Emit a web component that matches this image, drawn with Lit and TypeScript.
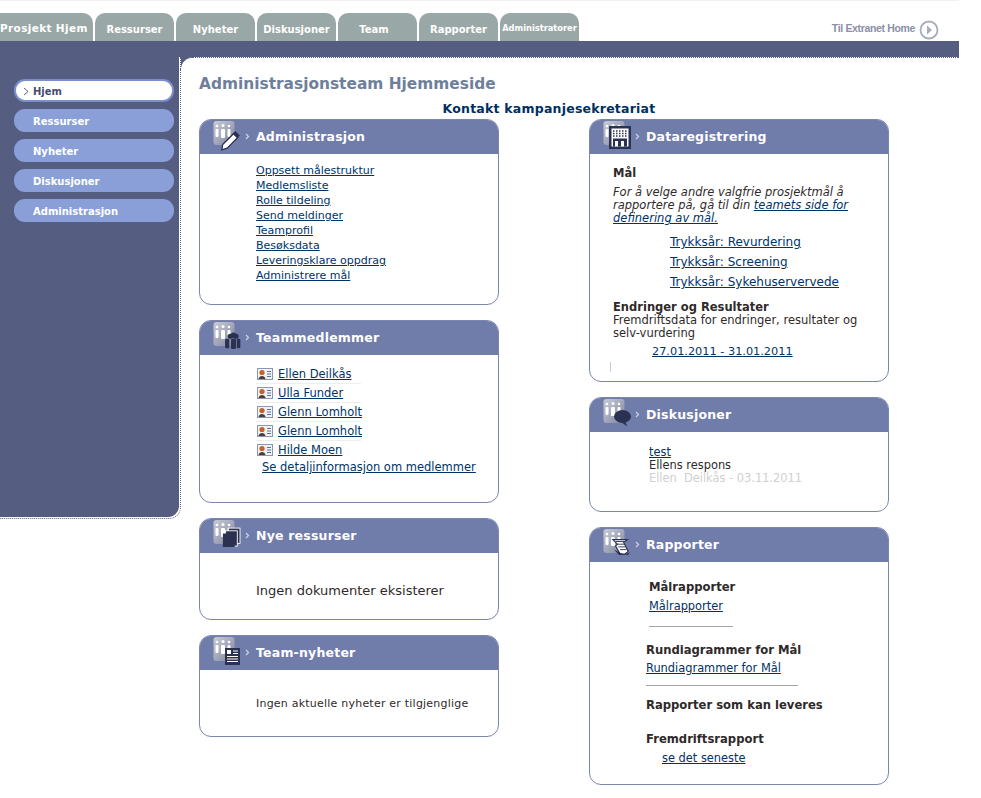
import { LitElement, html, css, svg } from "lit";
import { customElement } from "lit/decorators.js";

const overlays: Record<string, unknown> = {
  pen: svg`<g transform="translate(-1,3) scale(.9)"><path d="M13 25 L25 13 L30 17 L18 29 L12 31 Z" fill="#fff" stroke="#2b3150" stroke-width="1.4"/><path d="M24 13 L27 10 L32 15 L29 18 Z" fill="#2b3150"/></g>`,
  people: svg`<g transform="translate(2,3.5) scale(.85)"><circle cx="19" cy="15" r="3" fill="#2b3150"/><circle cx="23" cy="14" r="3.4" fill="#2b3150"/><circle cx="26" cy="15" r="3" fill="#2b3150"/><rect x="13" y="18" width="5" height="11" rx="1.5" fill="#2b3150"/><rect x="20" y="18" width="6" height="12" rx="1.5" fill="#2b3150"/><rect x="27" y="18" width="4" height="11" rx="1.5" fill="#2b3150"/></g>`,
  docs: svg`<g transform="translate(1,2) scale(.9)"><rect x="17" y="9" width="13" height="17" fill="#2b3150" stroke="#fff"/><rect x="14" y="12" width="13" height="17" fill="#2b3150" stroke="#fff"/><rect x="11" y="15" width="13" height="15" fill="#2b3150"/></g>`,
  news: svg`<g transform="translate(0,2)"><rect x="13" y="11" width="15" height="17" fill="#2b3150"/><rect x="15" y="13" width="4" height="4" fill="#fff"/><path d="M21 14H26M21 16.5H26M15 19.5H26M15 22H26M15 24.500H26" stroke="#fff" stroke-width="1"/></g>`,
  building: svg`<g transform="translate(1,3)"><rect x="6" y="4" width="22" height="23" fill="#2b3150"/><rect x="8.500" y="6.500" width="17" height="18" fill="#fff"/><path d="M10 9H24M10 11.500H24M10 14H24" stroke="#2b3150" stroke-width="1.300" stroke-dasharray="1.500 1.500"/><rect x="10" y="16.500" width="14" height="8" fill="#2b3150"/><rect x="12" y="19" width="3" height="5.500" fill="#fff"/><rect x="18" y="19" width="3" height="5.500" fill="#fff"/></g>`,
  speech: svg`<g transform="translate(-1.5,1.5)"><ellipse cx="22" cy="18" rx="8.500" ry="6.500" fill="#2b3150"/><path d="M24 22 L27 28 L21 24 Z" fill="#2b3150"/></g>`,
  scroll: svg`<g transform="translate(1,1) scale(.9)"><path d="M11 13 H27 L23 16 L28 26 L24 29 H19 L14 20 L16 18 Z" fill="#fff" stroke="#2b3150" stroke-width="1.300"/><path d="M14 15H24M16 18H24M17 21H25M19 24H26" stroke="#2b3150" stroke-width="1"/><path d="M12 24 L18 30 H28 L30 27 L24 30 Z" fill="#2b3150"/></g>`,
};

const cardIcon = (name: string) => html`<svg class="icon" width="34" height="32" viewBox="0 0 34 32">
  <defs><linearGradient id="g-${name}" x1="0" y1="0" x2="1" y2="1"><stop offset="0" stop-color="#c9ccd6"/><stop offset="1" stop-color="#7f84a0"/></linearGradient></defs>
  <rect x="1.500" y="2" width="21" height="24" rx="3" fill="url(#g-${name})"/>
  <g fill="#fff"><circle cx="5" cy="7" r="1.300"/><circle cx="11" cy="6.500" r="1.600"/><circle cx="17" cy="7" r="1.300"/>
  <rect x="3.500" y="10" width="3" height="8" rx="1"/><rect x="9" y="10" width="4" height="9" rx="1"/><rect x="15.500" y="10" width="3" height="8" rx="1"/></g>
  ${overlays[name]}
</svg>`;

const chevron = html`<svg class="chev" width="5" height="7" viewBox="0 0 5 7"><path d="M1 1 L3.500 3.500 L1 6" fill="none" stroke="#cdd2e6" stroke-width="1.200"/></svg>`;

const personIcon = html`<svg class="pi" width="16" height="12" viewBox="0 0 16 12">
  <rect x=".5" y=".5" width="15" height="11" fill="#eef1f6" stroke="#8a97b5"/>
  <circle cx="5" cy="4.500" r="2.600" fill="#c8602a"/><path d="M1.500 11 C2 7 8 7 8.500 11 Z" fill="#4e3d36"/>
  <path d="M10 3.500H14M10 6H14M10 8.500H14" stroke="#5f7296"/></svg>`;

@customElement("app-root")
export class AppRoot extends LitElement {
  static styles = css`
    :host { display: block; width: 981px; background: #fff; font-family: "DejaVu Sans", Verdana, sans-serif; font-size: 11px; color: #2f2a2a; }
    a { color: #003366; text-decoration: underline; }
    .shell { width: 959px; }
    .top { height: 40px; border-top: 1px solid #eef2f1; display: flex; align-items: flex-end; justify-content: space-between; }
    .tabs { display: flex; gap: 2px; }
    .tab { width: 79px; height: 28px; background: #9aa7a7; color: #fff; border-radius: 10px 10px 0 0; font-weight: 700; font-size: 10px; display: flex; align-items: center; justify-content: center; padding-top: 4px; box-sizing: border-box; white-space: nowrap; }
    .tab.first { width: 93px; border-radius: 0 10px 0 0; justify-content: flex-start; font-size: 10.500px; letter-spacing: .35px; padding-top: 2px; }
    .tab.small { font-size: 8.300px; padding-top: 2px; }
    .tab.team { padding-right: 7px; }
    .home { box-sizing: border-box; display: flex; align-items: center; gap: 4px; padding: 5px 20px 0 0; height: 28px; font-family: "Liberation Sans", Arial, sans-serif; font-weight: 700; font-size: 10.500px; letter-spacing: -.35px; color: #8a8fa8; }
    .home span { margin-top: -3px; }
    .band { height: 16px; background: #555e80; }
    .row { display: flex; align-items: flex-start; background: linear-gradient(#555e80, #555e80) no-repeat 0 0 / 200px 20px; }
    .sidewrap { box-sizing: border-box; width: 181px; height: 462px; flex: none; background: #fff; border-right: 1px dotted #555e80; border-bottom: 1px dotted #555e80; border-bottom-right-radius: 12px; padding: 0 1px 1px 0; }
    .side { box-sizing: border-box; height: 100%; background: #555e80; border-bottom-right-radius: 11px; padding: 22px 5px 0 14px; display: flex; flex-direction: column; gap: 7px; }
    .nav { height: 23px; background: #8a9fd8; color: #fff; font-weight: 700; font-size: 10px; border-radius: 11px; padding: 1px 0 0 19px; box-sizing: border-box; display: flex; align-items: center; }
    .nav.on { background: #fff; color: #454d70; border: 2px solid #7a8fcb; padding-left: 7px; gap: 4px; }
    .main { flex: 1; position: relative; background: #fff; border-top: 1px dotted #555e80; border-top-left-radius: 12px; padding: 0 60px 13px 18px; min-height: 720px; box-sizing: border-box; }
    .main::before { content: ""; position: absolute; left: -1px; top: -1px; width: 12px; height: 12px; border-top: 1px dotted #555e80; border-left: 1px dotted #555e80; border-top-left-radius: 12px; }
    h1 { margin: 0; font-size: 15.400px; font-weight: 700; color: #6e7f9c; line-height: 20px; padding-top: 16px; }
    .contact { text-align: center; width: 700px; font-size: 12.500px; letter-spacing: .22px; font-weight: 700; color: #00305f; line-height: 16px; margin-top: 7px; margin-bottom: 2px; }
    .cols { display: flex; gap: 90px; align-items: flex-start; }
    .col { width: 300px; display: flex; flex-direction: column; gap: 15px; }
    .card { box-sizing: border-box; border: 1px solid #7a86ad; border-radius: 12px; overflow: hidden; background: #fff; }
    .head { box-sizing: border-box; height: 35px; margin: -1px -1px 0; padding: 0 0 0 13px; background: #707caa; display: flex; align-items: center; color: #fff; font-size: 12.500px; letter-spacing: .2px; font-weight: 700; }
    .icon { flex: none; margin-top: -3px; }
    .chev { flex: none; margin: 0 6px 0 -1px; }
    .body { display: flex; flex-direction: column; }
    .links { padding: 9px 0 0 56px; line-height: 15px; font-size: 11px; height: 150px; box-sizing: border-box; align-items: flex-start; }
    .members { padding: 10px 0 0 56px; height: 147px; box-sizing: border-box; font-size: 11.500px; }
    .member { display: flex; width: 105px; height: 18px; border-bottom: 1px solid #eee; align-items: center; gap: 5px; white-space: nowrap; }
    .member:nth-child(5) { border-bottom: none; }
    .pi { margin-left: 1px; flex: none; }
    .more { padding-left: 6px; line-height: 14px; margin-top: 1px; }
    .res { height: 66px; padding: 30px 0 0 56px; box-sizing: border-box; font-size: 13px; line-height: 15px; }
    .nn { height: 66px; padding: 27px 0 0 56px; box-sizing: border-box; font-size: 11px; line-height: 13px; letter-spacing: .22px; }
    .data { height: 227px; padding: 13px 0 0 23px; box-sizing: border-box; line-height: 13px; font-size: 11.500px; }
    .data b, .rep b { display: block; }
    .data em { display: block; margin-top: 6px; width: 245px; }
    .goals { display: flex; flex-direction: column; gap: 7px; padding: 11px 0 0 57px; align-items: flex-start; font-size: 12px; }
    .data .sub { margin-top: 12px; }
    .date { display: block; margin: 5px 0 0 39px; font-size: 11.300px; }
    .tick { width: 1px; height: 10px; background: #ccc; margin: 4px 0 0 -3px; }
    .disc { height: 79px; padding: 14px 0 0 59px; box-sizing: border-box; line-height: 13px; font-size: 11.400px; }
    .disc .mute { color: #cfcfcf; }
    .rep { height: 222px; box-sizing: border-box; padding: 18px 0 0 56px; line-height: 14px; font-size: 11.400px; }
    .rep b { font-size: 11.600px; }
    .rep hr { border: none; height: 1px; background: #a5a5a5; margin: 0; }
    .ind { padding-left: 3px; }
    .rep a { display: block; }
    .l1 { margin-top: 5px; }
    .hr1 { width: 84px; margin-top: 13px !important; }
    .b2 { margin-top: 16px; }
    .l2 { margin-top: 4px; }
    .hr2 { width: 152px; margin-top: 10px !important; }
    .b3 { margin-top: 12px; }
    .b4 { margin-top: 20px; }
    .l4 { margin: 5px 0 0 16px; }
  `;

  render() {
    const tabs = ["Ressurser", "Nyheter", "Diskusjoner", "Team", "Rapporter"];
    const nav = ["Ressurser", "Nyheter", "Diskusjoner", "Administrasjon"];
    const links = ["Oppsett målestruktur", "Medlemsliste", "Rolle tildeling", "Send meldinger", "Teamprofil", "Besøksdata", "Leveringsklare oppdrag", "Administrere mål"];
    const members = ["Ellen Deilkås", "Ulla Funder", "Glenn Lomholt", "Glenn Lomholt", "Hilde Moen"];
    const head = (icon: string, t: string) => html`<div class="head">${cardIcon(icon)}${chevron}<span>${t}</span></div>`;
    return html`
      <div class="shell">
        <div class="top">
          <div class="tabs">
            <div class="tab first">Prosjekt Hjem</div>
            ${tabs.map((t) => html`<div class="tab ${t === "Team" ? "team" : ""}">${t}</div>`)}
            <div class="tab small">Administratorer</div>
          </div>
          <div class="home"><span>Til Extranet Home</span>
            <svg width="20" height="20" viewBox="0 0 20 20"><circle cx="10" cy="10" r="8.500" fill="none" stroke="#a7adbd" stroke-width="1.800"/><path d="M8 5.500 L13 10 L8 14.500 Z" fill="#a7adbd"/></svg>
          </div>
        </div>
        <div class="band"></div>
        <div class="row">
          <div class="sidewrap">
            <div class="side">
              <div class="nav on"><svg width="6" height="9" viewBox="0 0 6 9"><path d="M1 1 L5 4.500 L1 8" fill="none" stroke="#454d70" stroke-width=".9"/></svg><span>Hjem</span></div>
              ${nav.map((n) => html`<div class="nav">${n}</div>`)}
            </div>
          </div>
          <div class="main">
            <h1>Administrasjonsteam Hjemmeside</h1>
            <div class="contact">Kontakt kampanjesekretariat</div>
            <div class="cols">
              <div class="col">
                <div class="card">${head("pen", "Administrasjon")}
                  <div class="body links">${links.map((l) => html`<a href="#">${l}</a>`)}</div>
                </div>
                <div class="card">${head("people", "Teammedlemmer")}
                  <div class="body members">
                    ${members.map((m) => html`<div class="member">${personIcon}<a href="#">${m}</a></div>`)}
                    <div class="more"><a href="#">Se detaljinformasjon om medlemmer</a></div>
                  </div>
                </div>
                <div class="card">${head("docs", "Nye ressurser")}<div class="res">Ingen dokumenter eksisterer</div></div>
                <div class="card">${head("news", "Team-nyheter")}<div class="nn">Ingen aktuelle nyheter er tilgjenglige</div></div>
              </div>
              <div class="col">
                <div class="card">${head("building", "Dataregistrering")}
                  <div class="data">
                    <b>Mål</b>
                    <em>For å velge andre valgfrie prosjektmål å rapportere på, gå til din <a href="#">teamets side for definering av mål.</a></em>
                    <div class="goals">
                      <a href="#">Trykksår: Revurdering</a>
                      <a href="#">Trykksår: Screening</a>
                      <a href="#">Trykksår: Sykehuservervede</a>
                    </div>
                    <b class="sub">Endringer og Resultater</b>
                    <div>Fremdriftsdata for endringer, resultater og<br />selv-vurdering</div>
                    <a class="date" href="#">27.01.2011 - 31.01.2011</a>
                    <div class="tick"></div>
                  </div>
                </div>
                <div class="card">${head("speech", "Diskusjoner")}
                  <div class="disc"><a href="#">test</a><br />Ellens respons<br /><span class="mute">Ellen&nbsp; Deilkås - 03.11.2011</span></div>
                </div>
                <div class="card">${head("scroll", "Rapporter")}
                  <div class="rep">
                    <div class="ind"><b>Målrapporter</b><a class="l1" href="#">Målrapporter</a><hr class="hr1" /></div>
                    <b class="b2">Rundiagrammer for Mål</b>
                    <a class="l2" href="#">Rundiagrammer for Mål</a>
                    <hr class="hr2" />
                    <b class="b3">Rapporter som kan leveres</b>
                    <b class="b4">Fremdriftsrapport</b>
                    <a class="l4" href="#">se det seneste</a>
                  </div>
                </div>
              </div>
            </div>
          </div>
        </div>
      </div>
    `;
  }
}
